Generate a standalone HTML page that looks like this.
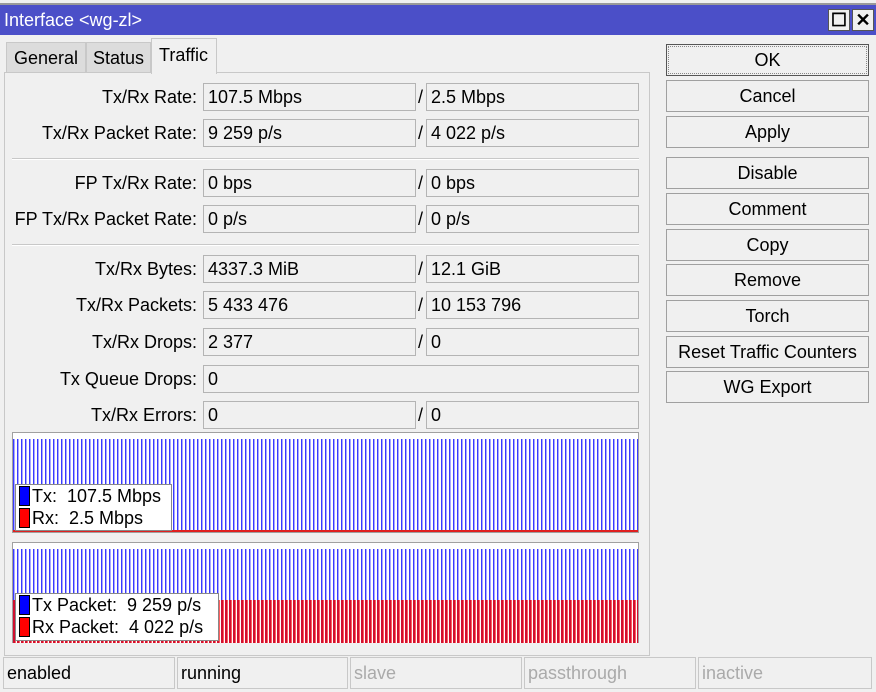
<!DOCTYPE html>
<html><head><style>
*{box-sizing:border-box;margin:0;padding:0}
body{width:876px;height:692px;background:#f0f0f0;font-family:"Liberation Sans",sans-serif;font-size:18px;color:#000;position:relative;overflow:hidden}
.a{position:absolute}
.title{left:0;top:5px;width:876px;height:30px;background:#4b4fc8;color:#fff;font-size:18px;padding:5px 0 0 4px}
.tb{top:9px;width:22px;height:22px;background:#f0f0f0;border:1px solid #555;color:#000;text-align:center;font-weight:bold;font-size:18px;line-height:20px}
.tab{top:42px;height:31px;background:#dcdcdc;border:1px solid #c8c8c8;padding-top:5px;text-align:center}
.panel{left:4px;top:72px;width:646px;height:584px;border:1px solid #c8c8c8}
.lbl{text-align:right;width:197px;left:0}
.f{background:#f0f0f0;border:1px solid #b4b4b4;height:28px;padding:3px 0 0 4px}
.sep{left:12px;width:627px;height:2px;border-top:1px solid #c8c8c8;border-bottom:1px solid #fff}
.btn{left:666px;width:203px;height:32px;border:1px solid #a0a0a0;background:#f0f0f0;text-align:center;padding-top:5px}
.g{left:12px;width:627px;height:101px;border:1px solid #a0a0a0;background:
repeating-linear-gradient(90deg,#3a3aff 0 1px,#a8a8ff 1px 2px,#fff 2px 4px)}
.leg{background:#fff;border:1px solid #888;padding-left:3px;line-height:22px}
.sw{display:inline-block;width:11px;height:20px;vertical-align:-4px;border:1px solid #000;margin-right:2px}
.st{top:657px;height:32px;border:1px solid #c8c8c8;padding:5px 0 0 3px}
</style></head><body>
<div class="a" style="left:0;top:3px;width:876px;height:2px;background:#999"></div>
<div class="a title">Interface &lt;wg-zl&gt;</div>
<div class="a tb" style="left:828px">☐</div>
<div class="a tb" style="left:852px">✕</div>
<div class="a panel"></div>
<div class="a tab" style="left:6px;width:80px">General</div>
<div class="a tab" style="left:86px;width:65px">Status</div>
<div class="a" style="left:151px;top:38px;width:66px;height:36px;background:#f0f0f0;border:1px solid #c8c8c8;border-bottom:none;padding:6px 0 0 7px">Traffic</div>

<div class="a lbl" style="top:87px">Tx/Rx Rate:</div>
<div class="a f" style="left:203px;top:83px;width:213px">107.5 Mbps</div><div class="a" style="left:418px;top:87px">/</div><div class="a f" style="left:426px;top:83px;width:213px">2.5 Mbps</div>
<div class="a lbl" style="top:123px">Tx/Rx Packet Rate:</div>
<div class="a f" style="left:203px;top:119px;width:213px">9 259 p/s</div><div class="a" style="left:418px;top:123px">/</div><div class="a f" style="left:426px;top:119px;width:213px">4 022 p/s</div>
<div class="a sep" style="top:158px"></div>
<div class="a lbl" style="top:173px">FP Tx/Rx Rate:</div>
<div class="a f" style="left:203px;top:169px;width:213px">0 bps</div><div class="a" style="left:418px;top:173px">/</div><div class="a f" style="left:426px;top:169px;width:213px">0 bps</div>
<div class="a lbl" style="top:209px">FP Tx/Rx Packet Rate:</div>
<div class="a f" style="left:203px;top:205px;width:213px">0 p/s</div><div class="a" style="left:418px;top:209px">/</div><div class="a f" style="left:426px;top:205px;width:213px">0 p/s</div>
<div class="a sep" style="top:244px"></div>
<div class="a lbl" style="top:259px">Tx/Rx Bytes:</div>
<div class="a f" style="left:203px;top:255px;width:213px">4337.3 MiB</div><div class="a" style="left:418px;top:259px">/</div><div class="a f" style="left:426px;top:255px;width:213px">12.1 GiB</div>
<div class="a lbl" style="top:295px">Tx/Rx Packets:</div>
<div class="a f" style="left:203px;top:291px;width:213px">5 433 476</div><div class="a" style="left:418px;top:295px">/</div><div class="a f" style="left:426px;top:291px;width:213px">10 153 796</div>
<div class="a lbl" style="top:332px">Tx/Rx Drops:</div>
<div class="a f" style="left:203px;top:328px;width:213px">2 377</div><div class="a" style="left:418px;top:332px">/</div><div class="a f" style="left:426px;top:328px;width:213px">0</div>
<div class="a lbl" style="top:369px">Tx Queue Drops:</div>
<div class="a f" style="left:203px;top:365px;width:436px">0</div>
<div class="a lbl" style="top:405px">Tx/Rx Errors:</div>
<div class="a f" style="left:203px;top:401px;width:213px">0</div><div class="a" style="left:418px;top:405px">/</div><div class="a f" style="left:426px;top:401px;width:213px">0</div>

<div class="a g" style="top:432px"><div class="a" style="left:0;top:0;width:100%;height:6px;background:#fff"></div><div class="a" style="left:0;bottom:0;width:100%;height:2px;background:#e02020"></div></div>
<div class="a leg" style="left:15px;top:484px;width:157px;height:47px"><div><span class="sw" style="background:#0000ff"></span>Tx:&nbsp; 107.5 Mbps</div><div><span class="sw" style="background:#ff0000"></span>Rx:&nbsp; 2.5 Mbps</div></div>

<div class="a g" style="top:542px"><div class="a" style="left:0;top:0;width:100%;height:6px;background:#fff"></div><div class="a" style="left:0;top:57px;width:100%;height:43px;background:repeating-linear-gradient(90deg,#d01030 0 2px,#ff6060 2px 3px,#fff 3px 4px)"></div></div>
<div class="a leg" style="left:15px;top:593px;width:204px;height:48px"><div><span class="sw" style="background:#0000ff"></span>Tx Packet:&nbsp; 9 259 p/s</div><div><span class="sw" style="background:#ff0000"></span>Rx Packet:&nbsp; 4 022 p/s</div></div>

<div class="a btn" style="top:44px;border:1px solid #555;outline:1px dotted #888;outline-offset:-3px">OK</div>
<div class="a btn" style="top:80px">Cancel</div>
<div class="a btn" style="top:116px">Apply</div>
<div class="a btn" style="top:157px">Disable</div>
<div class="a btn" style="top:193px">Comment</div>
<div class="a btn" style="top:229px">Copy</div>
<div class="a btn" style="top:264px">Remove</div>
<div class="a btn" style="top:300px">Torch</div>
<div class="a btn" style="top:336px">Reset Traffic Counters</div>
<div class="a btn" style="top:371px">WG Export</div>

<div class="a st" style="left:3px;width:172px">enabled</div>
<div class="a st" style="left:177px;width:171px">running</div>
<div class="a st" style="left:350px;width:172px;color:#aaa">slave</div>
<div class="a st" style="left:524px;width:172px;color:#aaa">passthrough</div>
<div class="a st" style="left:698px;width:174px;color:#aaa">inactive</div>
</body></html>
